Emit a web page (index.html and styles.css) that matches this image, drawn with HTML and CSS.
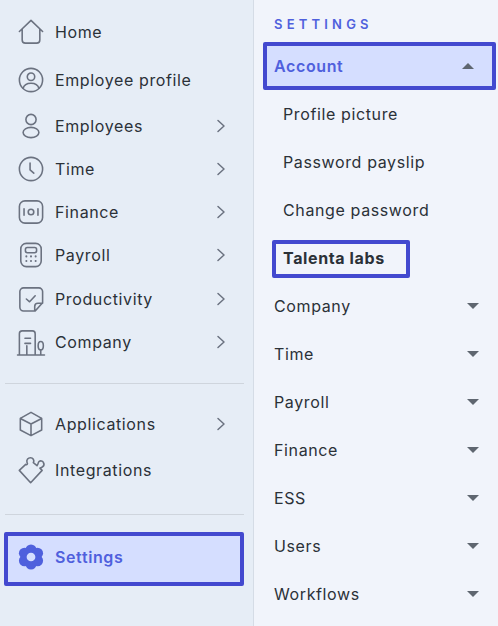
FILE: index.html
```html
<!DOCTYPE html>
<html lang="en">
<head>
<meta charset="utf-8">
<title>Settings</title>
<link rel="stylesheet" href="styles.css">
</head>
<body>
<div class="app">
  <aside class="side">
    <nav class="group">
      <a class="item tall"><svg class="ico" viewBox="0 0 28 28"><path d="M1.500 13.500 14 1.500l12.500 12M4.500 11v11.500a3.500 3.500 0 0 0 3.500 3.500h12a3.500 3.500 0 0 0 3.500-3.500V11"/></svg><span>Home</span></a>
      <a class="item tall"><svg class="ico" viewBox="0 0 28 28"><circle cx="14" cy="14" r="12.500"/><circle cx="14" cy="10.500" r="4"/><path d="M5.500 23c1-4 4.500-5.500 8.500-5.500s7.500 1.500 8.500 5.500"/></svg><span>Employee profile</span></a>
      <a class="item"><svg class="ico" viewBox="0 0 28 28"><circle cx="14" cy="7" r="5.500"/><ellipse cx="14" cy="21" rx="8.500" ry="5.500"/></svg><span>Employees</span><svg class="chev" viewBox="0 0 10 14"><path d="M2 1.500 8 7l-6 5.500"/></svg></a>
      <a class="item"><svg class="ico" viewBox="0 0 28 28"><circle cx="14" cy="14" r="12.500"/><path d="M13 7.500V15l4 3.500"/></svg><span>Time</span><svg class="chev" viewBox="0 0 10 14"><path d="M2 1.500 8 7l-6 5.500"/></svg></a>
      <a class="item"><svg class="ico" viewBox="0 0 28 28"><rect x="1.500" y="2" width="25" height="24" rx="6"/><circle cx="14" cy="14" r="3"/><path d="M6.500 10.500v7M21.500 10.500v7"/></svg><span>Finance</span><svg class="chev" viewBox="0 0 10 14"><path d="M2 1.500 8 7l-6 5.500"/></svg></a>
      <a class="item"><svg class="ico" viewBox="0 0 28 28"><rect x="3" y="1.500" width="22" height="25" rx="6"/><rect x="8" y="6" width="12" height="5.500" rx="2"/><path class="dots" d="M9 15.500h.01M14 15.500h.01M19 15.500h.01M9 20.500h.01M14 20.500h.01M19 20.500h.01"/></svg><span>Payroll</span><svg class="chev" viewBox="0 0 10 14"><path d="M2 1.500 8 7l-6 5.500"/></svg></a>
      <a class="item"><svg class="ico" viewBox="0 0 28 28"><path d="M26.500 18V6a4 4 0 0 0-4-4H6a4 4 0 0 0-4 4v17a4 4 0 0 0 4 4h12.500zM18 26.500V22a3.500 3.500 0 0 1 3.500-3.500h5M9 14l3.500 3 6-6.500"/></svg><span>Productivity</span><svg class="chev" viewBox="0 0 10 14"><path d="M2 1.500 8 7l-6 5.500"/></svg></a>
      <a class="item"><svg class="ico" viewBox="0 0 28 28"><path d="M-.5 28h29M1.500 28V5a3 3 0 0 1 3-3h11a3 3 0 0 1 3 3v23M7.500 10h6M7.500 15.500h6M9.500 28v-10M24.500 28v-5"/><ellipse cx="24.500" cy="18" rx="2.800" ry="4.500"/></svg><span>Company</span><svg class="chev" viewBox="0 0 10 14"><path d="M2 1.500 8 7l-6 5.500"/></svg></a>
    </nav>
    <hr class="rule">
    <nav class="group apps">
      <a class="item"><svg class="ico" viewBox="0 0 28 28"><path d="M14 1.500 25.500 8v12.500L14 26.500 2.500 20.500V8zM2.500 8 14 14l11.500-6M14 14v12.500"/></svg><span>Applications</span><svg class="chev" viewBox="0 0 10 14"><path d="M2 1.500 8 7l-6 5.500"/></svg></a>
      <a class="item integ"><svg class="ico" viewBox="0 0 28 28"><path d="M1.400 14.400 8.300 8c1.200 1 2.600-.4 1.400-2.200C8.800 3 11 .7 13.500.8 16 .9 18 3.200 16.500 6.100l4 3.200c1.400-1.800 1-3.400 2.300-4.500 1.300-1.200 3.600-.6 4.500.9 1 1.600.6 3.800-.9 5-1 .8-2.200.8-2.800 1.300l2.400 2.400-12.400 13.300z"/></svg><span>Integrations</span></a>
    </nav>
    <hr class="rule second">
    <a class="item active"><svg class="ico gear" viewBox="0 0 28 28"><circle cx="14" cy="6.500" r="6"/><circle cx="14" cy="21.500" r="6"/><circle cx="7" cy="10" r="6"/><circle cx="21" cy="10" r="6"/><circle cx="7" cy="18" r="6"/><circle cx="21" cy="18" r="6"/><circle class="hole" cx="14" cy="14" r="4.700"/></svg><span>Settings</span></a>
  </aside>
  <main class="panel">
    <h2 class="title">SETTINGS</h2>
    <a class="sec open"><span>Account</span><i class="tri up"></i></a>
    <a class="sub">Profile picture</a>
    <a class="sub">Password payslip</a>
    <a class="sub">Change password</a>
    <a class="sub labs"><b>Talenta labs</b></a>
    <a class="sec"><span>Company</span><i class="tri"></i></a>
    <a class="sec"><span>Time</span><i class="tri"></i></a>
    <a class="sec"><span>Payroll</span><i class="tri"></i></a>
    <a class="sec"><span>Finance</span><i class="tri"></i></a>
    <a class="sec"><span>ESS</span><i class="tri"></i></a>
    <a class="sec"><span>Users</span><i class="tri"></i></a>
    <a class="sec"><span>Workflows</span><i class="tri"></i></a>
  </main>
</div>
</body>
</html>
```

FILE: styles.css
```css
* { box-sizing: border-box; }
html, body { margin: 0; height: 100%; }
body { font-family: Inter, "Noto Sans", sans-serif; font-size: 16px; color: #2b3138; overflow: hidden; letter-spacing: .62px; }
.app { display: flex; width: 498px; height: 626px; overflow: hidden; }
.side { width: 254px; flex: none; background: #e6edf6; border-right: 1px solid #d5dce6; padding-top: 8.200px; display: flex; flex-direction: column; }
.group { display: flex; flex-direction: column; }
.item { display: flex; align-items: center; height: 43.200px; padding: 0 27px 0 18px; }
.item.tall { height: 48px; }
.item span { margin-left: 11px; flex: 1; }
.ico { width: 26px; height: 26px; flex: none; overflow: visible; fill: none; stroke: #6b7280; stroke-width: 1.700; stroke-linecap: round; stroke-linejoin: round; }
.dots { stroke-width: 2.200; }
.chev { width: 10px; height: 14px; flex: none; fill: none; stroke: #6b7280; stroke-width: 1.500; stroke-linecap: round; stroke-linejoin: round; }
.rule { border: 0; border-top: 1px solid #cfd5dd; margin: 19.500px 5px 0; width: 239px; height: 0; }
.apps { margin-top: 18.800px; }
.integ { height: 48px; }
.rule.second { margin-top: 20px; }
.active { margin: 17.500px 0 0 4px; width: 240px; height: 54px; padding: 0 0 4px 10px; background: #d5deff; border: 4px solid #4349cf; border-radius: 2px; color: #4f60dd; font-weight: 600; }
.gear { fill: #4f60dd; stroke: none; }
.hole { fill: #d5deff; }
.panel { flex: 1; background: #f1f4fb; padding-top: 16px; display: flex; flex-direction: column; align-items: flex-start; }
.title { margin: 0 0 0 20px; font-size: 13px; line-height: 16px; font-weight: 600; letter-spacing: 4.200px; color: #4f60dd; }
.sec { display: flex; align-items: center; justify-content: space-between; width: 100%; height: 48px; padding: 0 19px 0 20px; }
.sec.open { margin: 10px 0 0 9px; width: 233px; height: 48px; padding: 0 18px 0 7px; background: #d5deff; border: 4px solid #4349cf; border-radius: 2px; color: #4f60dd; font-weight: 600; }
.tri { width: 0; height: 0; border-left: 6.500px solid transparent; border-right: 6.500px solid transparent; border-top: 6.500px solid #5f6670; }
.tri.up { border-top: 0; border-bottom: 6.500px solid #5f6670; }
.sub { display: flex; align-items: center; height: 48px; padding-left: 29px; }
.labs { margin: 6px 0 4px 18px; height: 38px; width: 138px; padding: 0 0 2px 7px; border: 4px solid #4349cf; border-radius: 2px; }
.labs b { font-weight: 700; }
```
